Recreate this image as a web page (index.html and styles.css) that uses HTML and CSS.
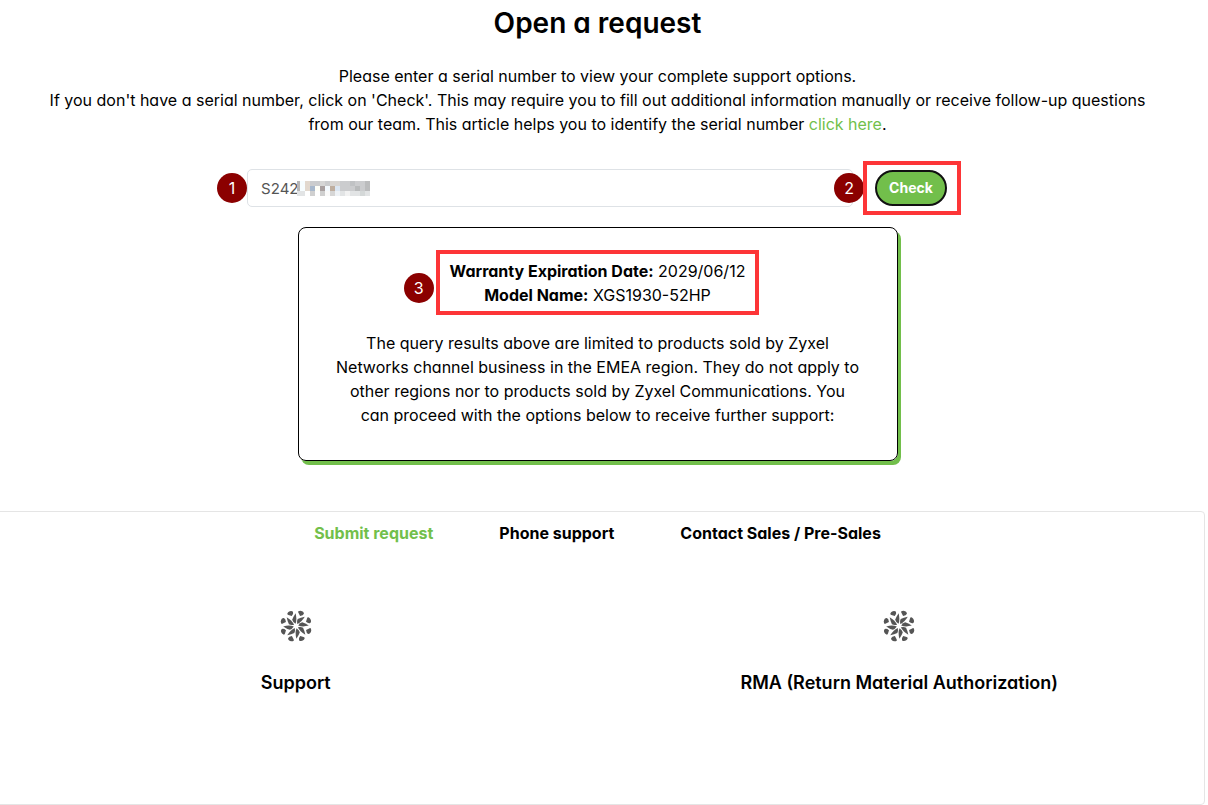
FILE: index.html
```html
<!DOCTYPE html>
<html lang="en">
  <head>
    <meta charset="UTF-8" />
    <meta name="viewport" content="width=device-width, initial-scale=1.0" />
    <title>Open a request</title>
    <link rel="stylesheet" href="styles.css">
  </head>
  <body>
    <svg width="0" height="0" class="sprite" aria-hidden="true">
      <symbol id="wheel" viewBox="-16 -16 32 32">
        <g id="blade">
          <path d="M-3 -14.2 Q-4.8 -16 -7.6 -14 Q-9.8 -11.6 -7.6 -11 L-4.2 -10 Q-2.2 -12.4 -3 -14.2Z" />
          <path d="M-0.4 -12.8 Q1.2 -6.5 -0.5 -2.2 Q-3.2 -4 -3.8 -6.2 Q-2.8 -9.2 -0.4 -12.8Z" />
        </g>
        <use href="#blade" transform="rotate(45)" />
        <use href="#blade" transform="rotate(90)" />
        <use href="#blade" transform="rotate(135)" />
        <use href="#blade" transform="rotate(180)" />
        <use href="#blade" transform="rotate(225)" />
        <use href="#blade" transform="rotate(270)" />
        <use href="#blade" transform="rotate(315)" />
      </symbol>
    </svg>

    <main class="page">
      <h1>Open a request</h1>
      <p class="intro">
        Please enter a serial number to view your complete support options.<br />
        If you don't have a serial number, click on 'Check'. This may require you to fill out additional information manually or receive follow-up questions from our team. This article helps you to identify the serial number <a href="#">click here</a>.
      </p>

      <form class="search">
        <div class="field">
          <span class="badge badge-left">1</span>
          <input type="text" value="S242" aria-label="Serial number" />
          <!-- pixelated rest of the serial number -->
          <svg class="mask" viewBox="0 0 73 15" shape-rendering="crispEdges" aria-hidden="true">
            <rect width="73" height="10" fill="#cbccce" />
            <rect y="10" width="73" height="5" fill="#e2e4e5" />
            <rect width="3" height="10" fill="#b8b6b6" />
            <rect x="3" width="5" height="10" fill="#f7fdff" />
            <rect x="8" width="5" height="10" fill="#e2d8ce" />
            <rect x="23" width="5" height="5" fill="#d6d6d6" />
            <rect x="33" width="10" height="5" fill="#d8d5d2" />
            <rect x="53" width="5" height="5" fill="#c0c2c4" />
            <rect x="68" width="5" height="10" fill="#bbbcbd" />
            <rect x="13" y="5" width="5" height="5" fill="#a8b8cc" />
            <rect x="18" y="5" width="5" height="5" fill="#fffff8" />
            <rect x="23" y="5" width="5" height="5" fill="#a9a0a0" />
            <rect x="28" y="5" width="5" height="5" fill="#f4faff" />
            <rect x="33" y="5" width="5" height="5" fill="#bfae9f" />
            <rect x="38" y="5" width="5" height="5" fill="#dbe6f2" />
            <rect x="58" y="5" width="5" height="5" fill="#b8babb" />
            <rect x="8" y="10" width="5" height="5" fill="#fff" />
            <rect x="13" y="10" width="5" height="5" fill="#d0d0d0" />
            <rect x="18" y="10" width="5" height="5" fill="#fff" />
            <rect x="23" y="10" width="5" height="5" fill="#cfcfcf" />
            <rect x="28" y="10" width="5" height="5" fill="#fafafa" />
            <rect x="33" y="10" width="5" height="5" fill="#d6d6d6" />
            <rect x="38" y="10" width="5" height="5" fill="#eef2f6" />
            <rect x="48" y="10" width="5" height="5" fill="#f2f2f2" />
            <rect x="63" y="10" width="5" height="5" fill="#d4d8d8" />
          </svg>
          <span class="badge badge-right">2</span>
        </div>
        <div class="highlight highlight-check">
          <button type="button" class="check">Check</button>
        </div>
      </form>

      <section class="result">
        <div class="highlight highlight-warranty">
          <span class="badge badge-lower">3</span>
          <b>Warranty Expiration Date:</b> 2029/06/12<br />
          <b>Model Name:</b> XGS1930-52HP
        </div>
        <p>The query results above are limited to products sold by Zyxel Networks channel business in the EMEA region. They do not apply to other regions nor to products sold by Zyxel Communications. You can proceed with the options below to receive further support:</p>
      </section>

      <section class="panel">
        <nav class="tabs">
          <button type="button" class="tab active">Submit request</button>
          <button type="button" class="tab">Phone support</button>
          <button type="button" class="tab">Contact Sales / Pre-Sales</button>
        </nav>
        <div class="options">
          <a href="#" class="option">
            <svg class="icon"><use href="#wheel" /></svg>
            Support
          </a>
          <a href="#" class="option">
            <svg class="icon"><use href="#wheel" /></svg>
            RMA (Return Material Authorization)
          </a>
        </div>
      </section>
    </main>
  </body>
</html>
```

FILE: styles.css
```css
* {
  box-sizing: border-box;
}

body {
  margin: 0;
  background-color: #fff;
  color: #000;
  font-family: Inter, sans-serif;
  font-feature-settings: "cv11";
  font-size: 16px;
  line-height: 24px;
  overflow-x: hidden;
}

.sprite {
  position: absolute;
}

.page {
  margin: 0 3px 0 -10px;
}

h1 {
  margin: 0;
  padding-top: 6px;
  font-size: 28px;
  line-height: 34px;
  font-weight: 600;
  text-align: center;
}

.intro {
  margin: 24px 40px 0;
  text-align: center;
}

.intro a {
  color: #72bf4b;
  text-decoration: none;
}

.search {
  display: flex;
  justify-content: center;
  align-items: center;
  gap: 10px;
  margin-top: 25px;
  padding-left: 13px;
}

.field {
  position: relative;
  flex: 0 1 606px;
}

.field input {
  display: block;
  width: 100%;
  height: 38px;
  padding: 0 13px;
  border: 1px solid #dee2e6;
  border-radius: 5px;
  color: #555;
  font: inherit;
  font-size: 15px;
}

.mask {
  position: absolute;
  left: 50px;
  top: 12px;
  width: 73px;
  height: 15px;
}

.badge {
  position: absolute;
  top: 50%;
  width: 30px;
  height: 30px;
  margin-top: -15px;
  border-radius: 50%;
  background-color: #8b0000;
  color: #fff;
  font-size: 16px;
  line-height: 30px;
  text-align: center;
}

.badge-left {
  right: 100%;
}

.badge-right {
  right: -11px;
}

.badge-lower {
  top: 60%;
  right: calc(100% + 6px);
}

.highlight {
  position: relative;
  border: 4px solid #fd3537;
}

.highlight-check {
  padding: 5px 10px 5px 8px;
}

.check {
  display: block;
  height: 36px;
  padding: 0 12px;
  border: 2px solid #111;
  border-radius: 18px;
  background-color: #72bf4b;
  color: #fff;
  font: inherit;
  font-size: 14px;
  font-weight: 700;
}

.result {
  max-width: 600px;
  margin: 12px auto 0;
  padding: 22px 36px 33px;
  border: 1px solid #000;
  border-radius: 8px;
  box-shadow: 3px 4px 0 #72bf4b;
  text-align: center;
}

.highlight-warranty {
  width: fit-content;
  margin: 0 auto;
  padding: 5px 10px 4px;
}

.highlight b {
  font-weight: 700;
}

.result p {
  margin: 16px 0 0;
}

.panel {
  min-height: 294px;
  margin-top: 50px;
  border: 1px solid #e5e5e5;
  border-radius: 4px;
}

.tabs {
  display: flex;
  justify-content: center;
  gap: 66px;
  padding-top: 9px;
}

.tab {
  padding: 0;
  border: none;
  background: none;
  color: #000;
  font: inherit;
  font-weight: 700;
}

.tab.active {
  color: #72bf4b;
}

.options {
  display: grid;
  grid-template-columns: 1fr 1fr;
  padding: 65px 3px 0;
}

.option {
  display: flex;
  flex-direction: column;
  align-items: center;
  gap: 29px;
  color: #000;
  font-size: 18px;
  font-weight: 600;
  text-decoration: none;
}

.icon {
  width: 32px;
  height: 32px;
  fill: #555;
}
```
